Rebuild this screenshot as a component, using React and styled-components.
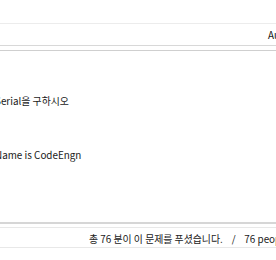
import React from 'react'
import styled, { createGlobalStyle } from 'styled-components'

const GlobalStyle = createGlobalStyle`
  html, body {
    margin: 0;
    padding: 0;
    background: #ffffff;
    overflow: hidden;
  }
  body {
    font-family: "Noto Sans CJK KR", "Noto Sans", sans-serif;
    font-size: 9.9px;
    color: #222222;
  }
`

const Board = styled.div`
  width: 560px;
  margin-left: -5px;
  padding-top: 23px;
`

const HeadRow = styled.div`
  display: flex;
  align-items: center;
  height: 21px;
  border-top: 1px solid #ececec;
  border-bottom: 1px solid #d8d8d8;
`

const HeadSpacer = styled.div`
  width: 273px;
`

const HeadCell = styled.div`
  color: #111111;
`

const Rule = styled.div`
  margin-top: 4px;
  border-top: 1px solid #cfcfcf;
`

const Body = styled.div`
  padding: 44px 0 0 0;
  height: 127px;
  display: flex;
  flex-direction: column;
  gap: 41px;
`

const Line = styled.div`
  line-height: 13px;
  color: #1a1a1a;
`

const Foot = styled.div`
  border-top: 2px solid #d6d6d6;
`

const FootRow = styled.div`
  margin-top: 3px;
  height: 21px;
  padding-top: 3px;
  box-sizing: border-box;
  display: flex;
  align-items: center;
  border-top: 1px solid #e8e8e8;
  border-bottom: 1px solid #e8e8e8;
`

const FootSpacer = styled.div`
  width: 94px;
`

const Solved = styled.span`
  color: #222222;
  white-space: pre;
`

export default function App() {
  return (
    <>
      <GlobalStyle />
      <Board>
        <HeadRow>
          <HeadSpacer />
          <HeadCell>Author</HeadCell>
        </HeadRow>
        <Rule />
        <Body>
          <Line>Serial을 구하시오</Line>
          <Line>Name is CodeEngn</Line>
        </Body>
        <Foot>
          <FootRow>
            <FootSpacer />
            <Solved>총 76 분이 이 문제를 푸셨습니다.    /    76 people solved this problem.</Solved>
          </FootRow>
        </Foot>
      </Board>
    </>
  )
}
